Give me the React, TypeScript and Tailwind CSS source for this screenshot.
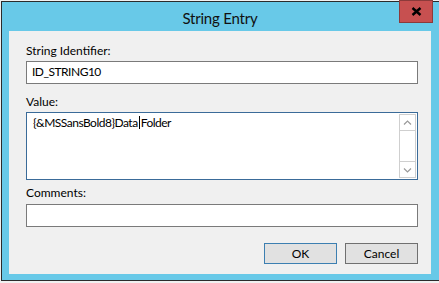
import React from "react";

const font = { fontFamily: 'Lato, "Noto Sans", sans-serif' };

export default function App() {
  return (
    <div className="relative w-[439px] h-[283px] bg-[#f0f0f0] overflow-hidden" style={font}>
      <div className="ml-[1px] mt-[1px] w-[438px] h-[280px] border-l border-t border-b border-[#2b2b2b] bg-[#68c9e8] flex flex-col">
        {/* title bar */}
        <div className="h-[29px] flex items-center justify-center">
          <span className="text-[15px] leading-[18px] text-[#111] -ml-[1px] mt-[2px] tracking-[-0.2px]">String Entry</span>
        </div>
        {/* client */}
        <div className="ml-[7px] w-[422px] h-[243px] bg-[#f0f0f0] flex flex-col pl-[17px] pr-[13px] pt-[12px]">
          <div className="text-[12px] leading-[15px] text-black h-[15px]">String Identifier:</div>
          <div className="mt-[3px] h-[23px] w-[392px] border border-[#7a7a7a] bg-white pl-[5px] pt-[2px] text-[12px] leading-[15px] text-black tracking-[-0.5px]">
            ID_STRING10
          </div>
          <div className="mt-[10px] text-[12px] leading-[15px] text-black h-[15px]">Value:</div>
          <div className="mt-[3px] h-[68px] w-[392px] border border-[#3a6b99] bg-white flex">
            <div className="flex-1 pl-[6px] pt-[2px] text-[12px] leading-[15px] text-black whitespace-nowrap tracking-[-0.5px]">
              {"{&MSSansBold8}Data"}
              <span className="inline-block w-[1px] h-[13px] bg-black align-[-2px] mx-[1px]"></span>
              Folder
            </div>
            <div className="mt-[1px] mr-[1px] w-[17px] h-[64px] border border-[#cfcfcf] bg-white flex flex-col">
              <div className="h-[16px] border-b border-[#cfcfcf] flex items-center justify-center">
                <svg width="9" height="6" viewBox="0 0 9 6">
                  <path d="M1 4.5 L4.5 1 L8 4.5" fill="none" stroke="#9a9a9a" strokeWidth="1.2" />
                </svg>
              </div>
              <div className="flex-1"></div>
              <div className="h-[16px] border-t border-[#cfcfcf] flex items-center justify-center">
                <svg width="9" height="6" viewBox="0 0 9 6">
                  <path d="M1 1.5 L4.5 5 L8 1.5" fill="none" stroke="#9a9a9a" strokeWidth="1.2" />
                </svg>
              </div>
            </div>
          </div>
          <div className="mt-[5px] text-[12px] leading-[15px] text-black h-[15px]">Comments:</div>
          <div className="mt-[4px] h-[23px] w-[392px] border border-[#7a7a7a] bg-white"></div>
          <div className="mt-[16px] w-[392px] flex justify-end gap-[8px]">
            <div className="w-[73px] h-[21px] border border-[#3c7fb1] bg-[#e1e1e1] flex items-center justify-center text-[12px] leading-[15px] text-black">
              OK
            </div>
            <div className="w-[73px] h-[21px] border border-[#707070] bg-[#e1e1e1] flex items-center justify-center text-[12px] leading-[15px] text-black">
              Cancel
            </div>
          </div>
        </div>
      </div>
      {/* close button */}
      <div className="absolute left-[399px] top-[0px] w-[34px] h-[23px] bg-[#c75050] border border-[#8c3a3a] flex items-center justify-center">
        <svg width="11" height="9" viewBox="0 0 11 9">
          <path d="M1.5 1 L9.5 8 M9.5 1 L1.5 8" stroke="#000" strokeWidth="2.4" strokeLinecap="butt" />
        </svg>
      </div>
    </div>
  );
}
